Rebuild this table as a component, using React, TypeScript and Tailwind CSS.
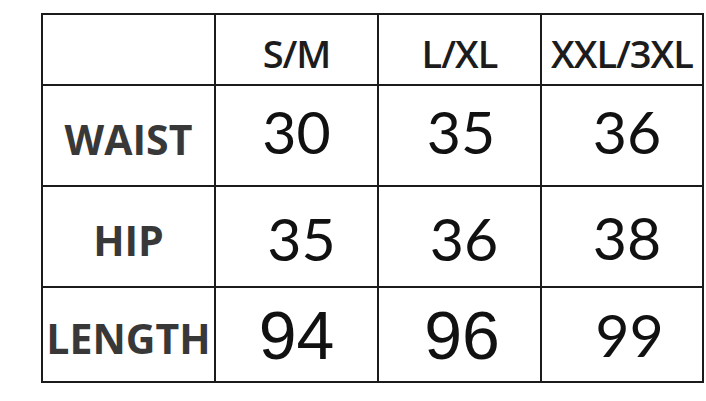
const sizes = ["S/M", "L/XL", "XXL/3XL"];

const rows = [
  {
    label: "WAIST",
    h: "h-[99px]",
    values: [
      { v: "30", cls: "text-[59px] font-['Lato',sans-serif] pb-[8px]" },
      { v: "35", cls: "text-[59px] font-['Lato',sans-serif] pb-[8px] pl-[3px]" },
      { v: "36", cls: "text-[59px] font-['Lato',sans-serif] pb-[8px] pl-[10px]" },
    ],
  },
  {
    label: "HIP",
    h: "h-[99px]",
    values: [
      { v: "35", cls: "text-[59px] font-['Lato',sans-serif] pt-[4px] pl-[10px]" },
      { v: "36", cls: "text-[59px] font-['Lato',sans-serif] pt-[4px] pl-[9px]" },
      { v: "38", cls: "text-[59px] font-['Lato',sans-serif] pt-[2px] pl-[10px]" },
    ],
  },
  {
    label: "LENGTH",
    h: "h-[93px]",
    values: [
      { v: "94", cls: "text-[68px] font-['Liberation_Sans',sans-serif]" },
      { v: "96", cls: "text-[68px] font-['Liberation_Sans',sans-serif] pl-[5px]" },
      { v: "99", cls: "text-[59px] font-['Lato',sans-serif] pl-[15px]" },
    ],
  },
];

export default function App() {
  return (
    <div className="w-[706px] h-[401px] bg-white overflow-hidden">
      <div className="ml-[41px] mt-[13px] w-[663px] grid grid-cols-[171px_161px_161px_160px] gap-[2px] p-[2px] bg-[#1b1b1b]">
        {/* header row */}
        <div className="h-[69px] bg-white" />
        {sizes.map((s) => (
          <div
            key={s}
            className="h-[69px] bg-white flex items-center justify-center pt-[7px] text-[38px] leading-none font-semibold text-[#1c1c1c] font-['Open_Sans',sans-serif] tracking-[-1px]"
          >
            {s}
          </div>
        ))}

        {/* body rows */}
        {rows.map((r) => (
          <div key={r.label} className="contents">
            <div
              className={`${r.h} bg-white flex items-center justify-center pt-[7px] text-[41px] leading-none font-bold text-[#383838] font-['Open_Sans',sans-serif]`}
            >
              {r.label}
            </div>
            {r.values.map((c, i) => (
              <div
                key={i}
                className={`${r.h} bg-white flex items-center justify-center leading-none text-[#111] ${c.cls}`}
              >
                {c.v}
              </div>
            ))}
          </div>
        ))}
      </div>
    </div>
  );
}
